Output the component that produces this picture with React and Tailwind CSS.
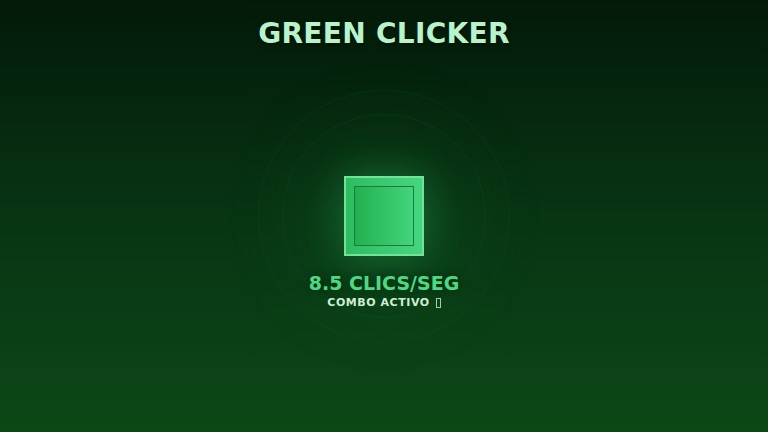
import React from "react";

const font = { fontFamily: '"DejaVu Sans", "Noto Sans", sans-serif' };

export default function App() {
    return (
        <div
            className="relative w-[768px] h-[432px] overflow-hidden flex flex-col items-center bg-gradient-to-b from-[#031a08] via-[#083514] to-[#0c4716]"
            style={font}
        >
            {/* Title */}
            <h1 className="mt-[16px] text-[28px] leading-[36px] font-bold tracking-[0.3px] text-[#b8f4cb] [text-shadow:0_2px_4px_rgba(0,0,0,0.5)]">
                GREEN CLICKER
            </h1>

            {/* Rings behind the button */}
            <div className="absolute left-[258px] top-[90px] w-[252px] h-[252px] rounded-full border border-[#1a5a28]/20" />
            <div className="absolute left-[282px] top-[114px] w-[204px] h-[204px] rounded-full border border-[#1a5a28]/20" />
            <div className="absolute left-[304px] top-[136px] w-[160px] h-[160px] rounded-full bg-[#1f8a3c]/15 blur-2xl" />

            {/* Clicker */}
            <div className="relative mt-[124px] w-[80px] h-[80px] flex items-center justify-center border-2 border-[#6fe39a] bg-gradient-to-r from-[#2dbd5f] to-[#47d680] shadow-[0_0_40px_rgba(52,211,120,0.3)]">
                <div className="w-[60px] h-[60px] border border-[#1b7a3c] bg-gradient-to-r from-[#22b04f] to-[#42d57d]" />
            </div>

            {/* Stats */}
            <div className="relative mt-[15px] text-[19px] leading-[24px] font-bold text-[#4fd883] [text-shadow:0_0_8px_rgba(0,0,0,0.4)]">
                8.5 CLICS/SEG
            </div>
            <div className="relative mt-[1px] flex items-center gap-[6px] text-[11px] leading-[14px] font-bold tracking-wider text-[#cdeed5]">
                <span>COMBO ACTIVO</span>
                <span className="inline-block w-[5px] h-[10px] border border-[#cdeed5]/80" />
            </div>
        </div>
    );
}
